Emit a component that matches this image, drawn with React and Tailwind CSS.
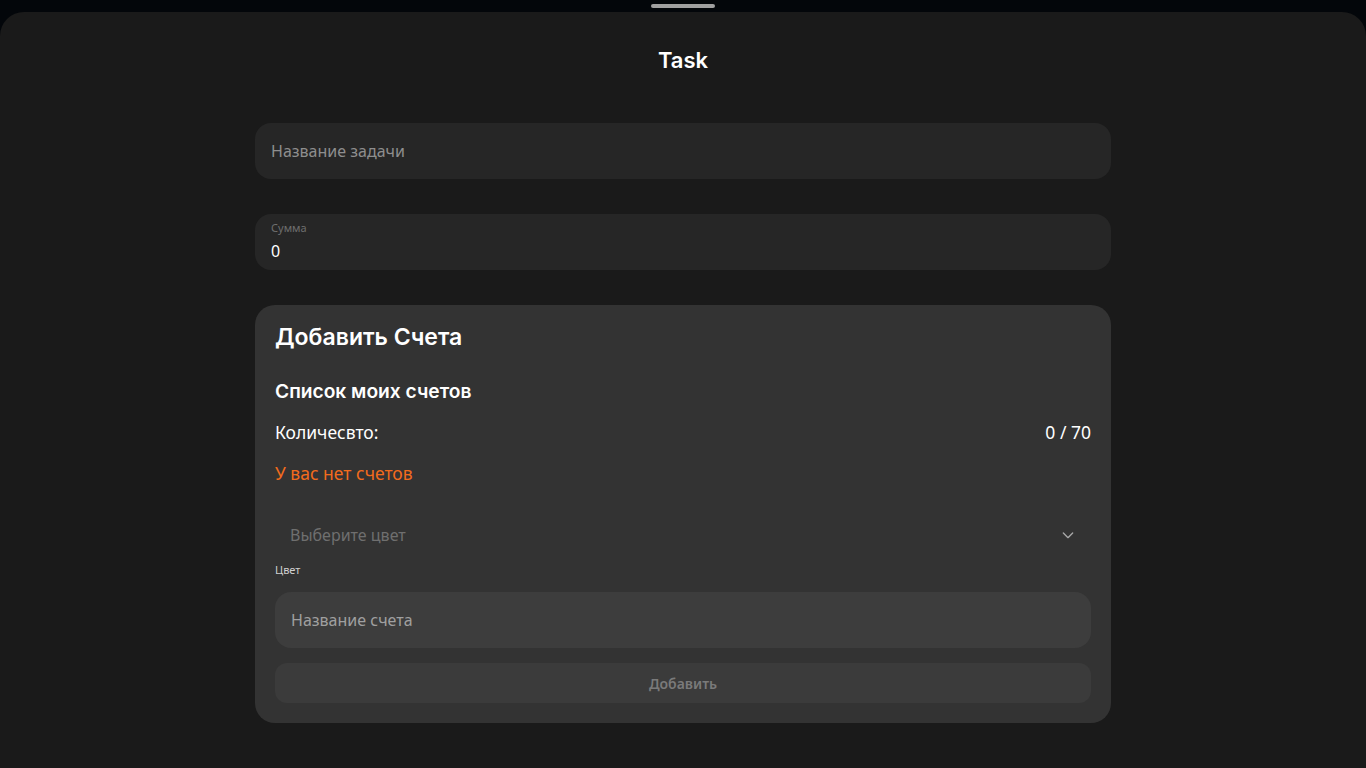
import React from "react";

export default function App() {
  const body = { fontFamily: '"Noto Sans", "Open Sans", sans-serif' };
  const head = { fontFamily: 'Inter, "Noto Sans", sans-serif' };
  return (
    <div className="w-[1366px] h-[768px] bg-[#03060a] flex flex-col overflow-hidden" style={body}>
      <div className="h-[12px] flex justify-center pt-[4px] shrink-0">
        <div className="w-[64px] h-[4px] rounded-full bg-[#a0a0a0]" />
      </div>
      <div className="flex-1 bg-[#1a1a1a] rounded-t-[24px] flex flex-col items-center">
        <h1 className="text-[22px] font-semibold text-white mt-[33px] leading-[30px]" style={head}>Task</h1>
        <div className="w-[856px] mt-[48px] flex flex-col">
          <div className="h-[56px] rounded-[16px] bg-[#262626] flex items-center px-[16px]">
            <span className="text-[16px] text-[#8e8e8e]">Название задачи</span>
          </div>
          <div className="h-[56px] rounded-[16px] bg-[#262626] flex flex-col px-[16px] pt-[7px] mt-[35px]">
            <span className="text-[11px] leading-[14px] text-[#6e6e6e]">Сумма</span>
            <span className="text-[16px] leading-[22px] text-white mt-[5px]">0</span>
          </div>
          <div className="rounded-[20px] bg-[#333333] mt-[35px] px-[20px] pt-[16px] pb-[20px] flex flex-col">
            <h2 className="text-[23px] font-semibold text-white leading-[32px]" style={head}>Добавить Счета</h2>
            <h3 className="text-[19.2px] font-semibold text-white leading-[26px] mt-[25px]" style={head}>Список моих счетов</h3>
            <div className="flex justify-between items-center mt-[16px] text-[17.5px] text-white leading-[24px]">
              <span>Количесвто:</span>
              <span>0 / 70</span>
            </div>
            <div className="text-[17.5px] text-[#f26b1d] leading-[24px] mt-[17px]">У вас нет счетов</div>
            <div className="h-[48px] mt-[26px] flex items-center justify-between px-[15px]">
              <span className="text-[16px] text-[#6f6f6f]">Выберите цвет</span>
              <svg width="16" height="16" viewBox="0 0 24 24" fill="none" stroke="#a8a8a8" strokeWidth="2" strokeLinecap="round" strokeLinejoin="round">
                <path d="M5 9l7 7 7-7" />
              </svg>
            </div>
            <div className="text-[11px] text-[#d0d0d0] leading-[14px] mt-[4px]">Цвет</div>
            <div className="h-[56px] rounded-[16px] bg-[#3d3d3d] flex items-center px-[16px] mt-[15px]">
              <span className="text-[16px] text-[#a0a0a0]">Название счета</span>
            </div>
            <button className="h-[40px] rounded-[12px] bg-[#3b3b3b] mt-[15px] flex items-center justify-center text-[14px] font-semibold text-[#7a7a7a]">
              Добавить
            </button>
          </div>
        </div>
      </div>
    </div>
  );
}
